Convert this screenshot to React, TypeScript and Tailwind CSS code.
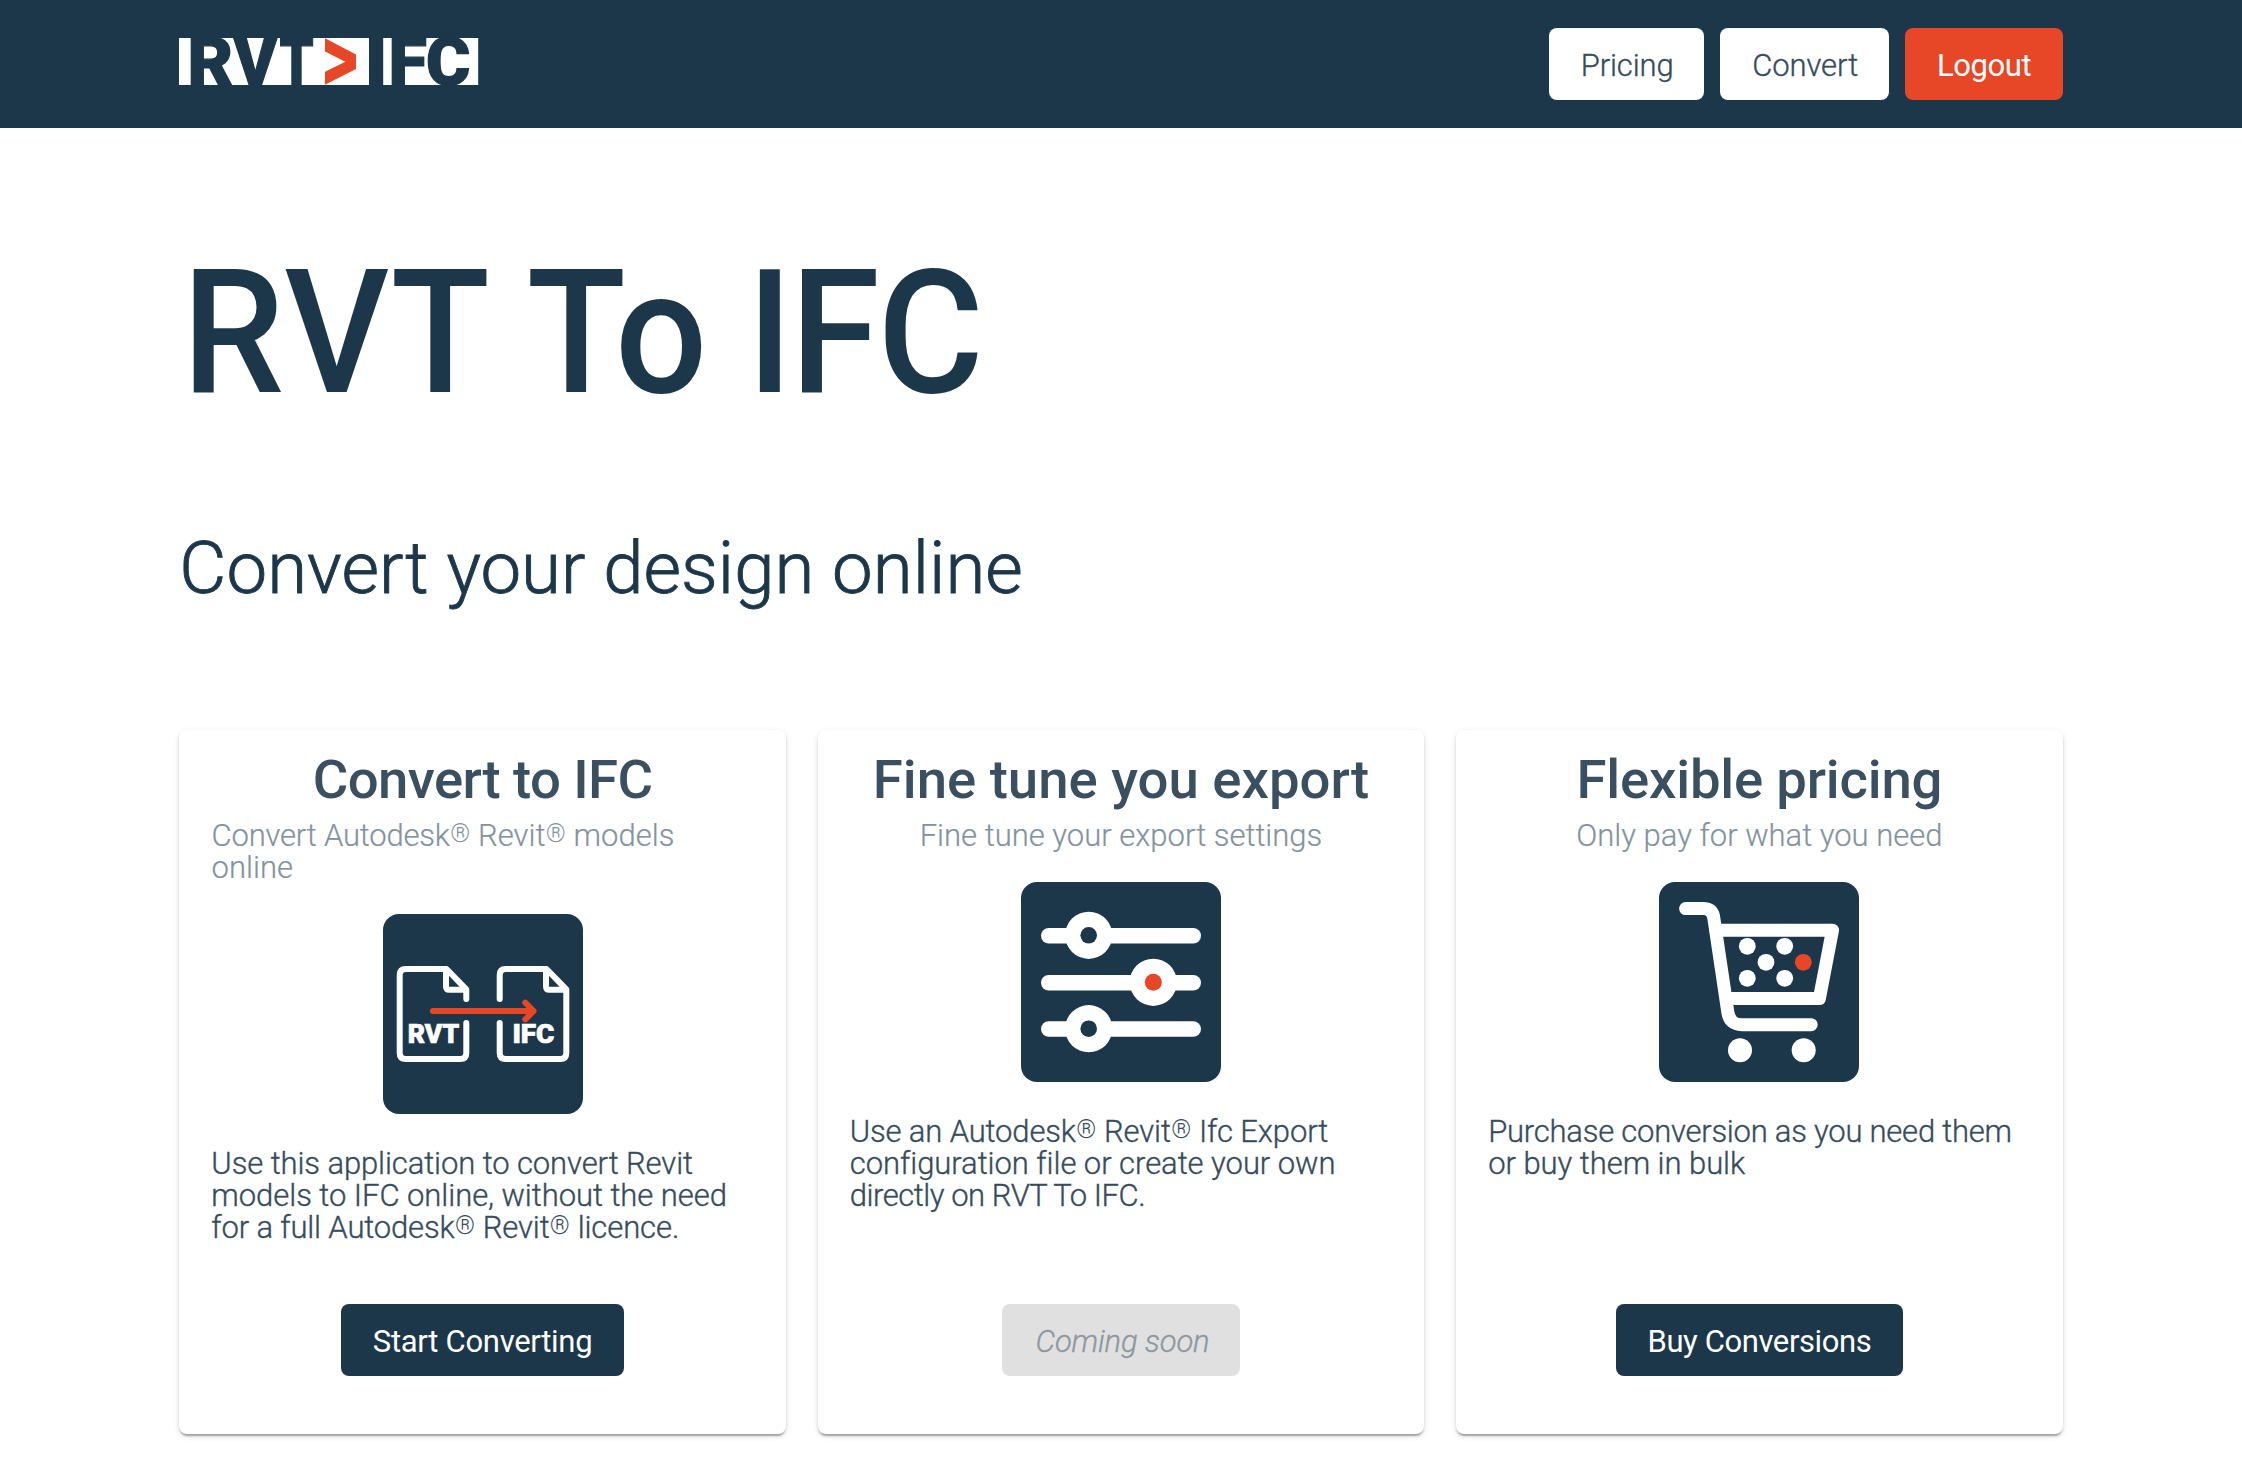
import type { ReactNode } from "react";

function Logo() {
  return (
    <svg width="300" height="47" viewBox="0 0 300 47" className="block overflow-visible">
      <rect x="0" y="0" width="190" height="47" fill="#fff" />
      <rect x="204.2" y="0" width="95" height="47" fill="#fff" />
      <g fill="#1c374a" stroke="#1c374a" strokeWidth="1.2" fontFamily="Roboto, sans-serif" fontWeight="900" fontSize="66.2">
        <text transform="translate(8.4 47) scale(1.06 1)">R</text>
        <text transform="translate(54.4 47)">V</text>
        <text transform="translate(100.4 47) scale(0.82 1)">T</text>
        <text transform="translate(209.4 47) scale(1.06 1)">F</text>
        <text transform="translate(247 47) scale(1.02 1)">C</text>
      </g>
      <path d="M146 0.3L177 16.4V31L146 46.7V33.7L166.3 23.7L146 13.4Z" fill="#e84727" />
    </svg>
  );
}

function ConvertIcon() {
  return (
    <svg width="200" height="200" viewBox="0 0 200 200" className="block">
      <rect width="200" height="200" rx="16" fill="#1c374a" />
      <g fill="none" stroke="#fff" strokeWidth="6" strokeLinecap="round" strokeLinejoin="round">
        <path d="M83.3 85V75.3L63.5 55H22.7Q16.7 55 16.7 61V139Q16.7 145 22.7 145H77.3Q83.3 145 83.3 139V109" />
        <path d="M63 56V72.5Q63 75.8 66.3 75.8H82" />
        <path d="M116.7 85V61Q116.7 55 122.7 55H163.5L183.3 75.3V139Q183.3 145 177.3 145H122.7Q116.7 145 116.7 139V109" />
        <path d="M163 56V72.5Q163 75.8 166.3 75.8H182" />
      </g>
      <g fill="none" stroke="#e84727" strokeWidth="6" strokeLinecap="round" strokeLinejoin="round">
        <path d="M50 97H150" />
        <path d="M142.3 88.7L150.6 97L142.3 105.4" />
      </g>
      <g fill="#fff" stroke="#fff" strokeWidth="0.7" fontFamily="Roboto, sans-serif" fontWeight="900" fontSize="26.4">
        <text x="24.8" y="128.8" textLength="51.4" lengthAdjust="spacingAndGlyphs">RVT</text>
        <text x="129.4" y="128.8" textLength="42" lengthAdjust="spacingAndGlyphs">IFC</text>
      </g>
    </svg>
  );
}

function SlidersIcon() {
  return (
    <svg width="200" height="200" viewBox="0 0 200 200" className="block">
      <rect width="200" height="200" rx="16" fill="#1c374a" />
      <g fill="#fff">
        <rect x="20" y="46" width="160" height="15.4" rx="7.7" />
        <rect x="20" y="93.1" width="160" height="15.4" rx="7.7" />
        <rect x="20" y="139.3" width="160" height="15.4" rx="7.7" />
        <circle cx="67.7" cy="53.3" r="23.6" />
        <circle cx="132.3" cy="100.3" r="23.6" />
        <circle cx="67.7" cy="146.7" r="23.6" />
      </g>
      <circle cx="67.7" cy="53.3" r="8.3" fill="#1c374a" />
      <circle cx="132.3" cy="100.3" r="8.5" fill="#e84727" />
      <circle cx="67.7" cy="146.7" r="8.3" fill="#1c374a" />
    </svg>
  );
}

function CartIcon() {
  return (
    <svg width="200" height="200" viewBox="0 0 200 200" className="block">
      <rect width="200" height="200" rx="16" fill="#1c374a" />
      <g fill="none" stroke="#fff" strokeWidth="13" strokeLinecap="round" strokeLinejoin="round">
        <path d="M26.6 26.6H45Q53.6 27 54.8 36L68.8 130Q70.5 142.7 83 142.7H152.2" />
        <path d="M57 48.2H173.5L160.4 116.5H68" />
      </g>
      <g fill="#fff">
        <circle cx="88.3" cy="64.3" r="8.4" />
        <circle cx="125.7" cy="64.3" r="8.4" />
        <circle cx="107" cy="80.3" r="8.4" />
        <circle cx="88.3" cy="96.3" r="8.4" />
        <circle cx="125.7" cy="96.3" r="8.4" />
        <circle cx="81" cy="168.3" r="12" />
        <circle cx="144.7" cy="168.3" r="12" />
      </g>
      <circle cx="144.3" cy="80.3" r="8.4" fill="#e84727" />
    </svg>
  );
}

function Reg() {
  return <span className="mx-[0.3px] inline-block -translate-y-[4px] text-[25px] leading-none tracking-normal [-webkit-text-stroke:0px]">®</span>;
}

function Card({ title, subtitle, icon, action, children }: { title: ReactNode; subtitle: ReactNode; icon: ReactNode; action: ReactNode; children: ReactNode }) {
  return (
    <section className="flex h-[704px] flex-1 flex-col items-center rounded-lg bg-white px-8 pt-[21.4px] pb-[58px] shadow-[0_4px_2px_-2px_rgba(0,0,0,0.2),0_2px_2px_0_rgba(0,0,0,0.14),0_2px_6px_0_rgba(0,0,0,0.12)]">
      <h3 className="text-[54.5px] leading-[56px] font-medium whitespace-nowrap text-[#3a5061]">{title}</h3>
      <div className="mt-[12.2px] max-w-full text-[31px] leading-8 font-light whitespace-nowrap text-[#8492a0] [-webkit-text-stroke:0.2px]">{subtitle}</div>
      <div className="mt-[30.4px]">{icon}</div>
      <div className="mt-[34px] self-stretch text-[31px] leading-8 font-light whitespace-nowrap text-[#364c5e] [-webkit-text-stroke:0.35px]">{children}</div>
      <div className="mt-auto">{action}</div>
    </section>
  );
}

const button = "flex h-[72px] items-center justify-center rounded-lg pt-[3px] text-[31px] leading-none whitespace-nowrap";

export default function App() {
  return (
    <div className="min-h-[1476px] bg-white font-['Roboto',sans-serif]">
      <header className="flex h-[128px] items-center justify-between bg-[#1c374a] px-[8%]">
        <div className="-mt-[6px]">
          <Logo />
        </div>
        <nav className="flex gap-4">
          <button className={`${button} w-[155px] bg-white pl-[2px] font-light tracking-[-0.1px] text-[#364c5e] [-webkit-text-stroke:0.35px]`}>Pricing</button>
          <button className={`${button} w-[169px] bg-white pl-[2px] font-light tracking-[-0.1px] text-[#364c5e] [-webkit-text-stroke:0.35px]`}>Convert</button>
          <button className={`${button} w-[158px] bg-[#e84727] pl-px tracking-[-0.4px] text-white`}>Logout</button>
        </nav>
      </header>
      <main className="px-[8%] text-[#1c374a]">
        <h1 className="ml-[3px] origin-left scale-x-94 pt-[105px] text-[173px] leading-[200px] font-medium [word-spacing:-1px]">
          <span className="tracking-[1.5px]">RVT</span> To <span className="tracking-[-2.5px]">IFC</span>
        </h1>
        <h2 className="pt-[96px] text-[72.5px] leading-[80px] font-light tracking-[0.05px] [-webkit-text-stroke:0.9px]">Convert your design online</h2>
        <div className="mt-[121px] flex gap-8">
          <Card
            title={<span className="tracking-[-0.6px]">Convert to IFC</span>}
            subtitle={
              <div className="w-[542px]">
                <span className="tracking-[-0.2px]">Convert Autodesk</span>
                <Reg /> Revit
                <Reg /> models
                <br />
                online
              </div>
            }
            icon={<ConvertIcon />}
            action={<button className={`${button} w-[283px] bg-[#1c374a] tracking-[-0.3px] text-white`}>Start Converting</button>}
          >
            <div className="tracking-[-0.1px]">Use this application to convert Revit</div>
            <div className="tracking-[-0.05px]">models to IFC online, without the need</div>
            <div className="tracking-[-0.1px]">
              <span className="tracking-[-0.15px]">for a full Autodesk</span>
              <Reg /> Revit
              <Reg /> licence.
            </div>
          </Card>
          <Card
            title="Fine tune you export"
            subtitle="Fine tune your export settings"
            icon={<SlidersIcon />}
            action={<button className={`${button} w-[238px] bg-[#e0e0e0] pl-[3px] font-light tracking-[-0.2px] text-[#8c979f] italic [-webkit-text-stroke:0.3px]`}>Coming soon</button>}
          >
            <div className="tracking-[-0.1px]">
              <span className="tracking-[-0.15px]">Use an Autodesk</span>
              <Reg /> Revit
              <Reg /> Ifc Export
            </div>
            <div className="tracking-[-0.05px]">configuration file or create your own</div>
            <div className="tracking-[-0.47px]">directly on RVT To IFC.</div>
          </Card>
          <Card
            title={<span className="tracking-[-0.2px]">Flexible pricing</span>}
            subtitle="Only pay for what you need"
            icon={<CartIcon />}
            action={<button className={`${button} w-[287px] bg-[#1c374a] tracking-[-0.4px] text-white`}>Buy Conversions</button>}
          >
            <div className="tracking-[-0.24px]">Purchase conversion as you need them</div>
            <div className="tracking-[-0.05px]">or buy them in bulk</div>
          </Card>
        </div>
      </main>
    </div>
  );
}
